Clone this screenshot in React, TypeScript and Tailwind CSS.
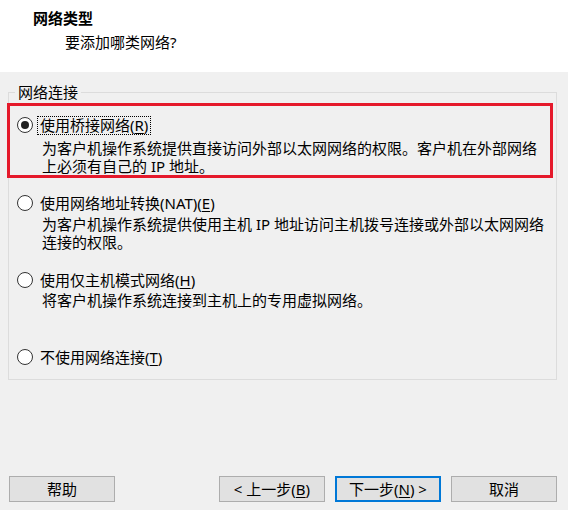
import type { ReactNode } from 'react';

const font = { fontFamily: '"Noto Sans", "Noto Sans CJK SC", sans-serif' };

function Radio({ checked }: { checked?: boolean }) {
  return (
    <span className="w-[16px] h-[16px] rounded-full border-[1.5px] border-[#333] bg-white flex items-center justify-center shrink-0">
      {checked && <span className="w-[8px] h-[8px] rounded-full bg-[#222]" />}
    </span>
  );
}

function OptionLabel({ children, checked, focused }: { children: ReactNode; checked?: boolean; focused?: boolean }) {
  return (
    <div className="h-[20px] flex items-center gap-[4px]">
      <Radio checked={checked} />
      <span
        className={
          focused
            ? 'border border-dotted border-black px-[2px] leading-[17px] whitespace-nowrap'
            : 'border border-transparent px-[2px] leading-[17px] whitespace-nowrap'
        }
      >
        {children}
      </span>
    </div>
  );
}

function Key({ k }: { k: string }) {
  return <u className="underline-offset-2">{k}</u>;
}

function Button({ children, primary }: { children: ReactNode; primary?: boolean }) {
  return (
    <button
      className={
        primary
          ? 'w-[106px] h-[26px] bg-[#e1e1e1] border-2 border-[#0078d7] flex items-center justify-center text-[15px] leading-[18px] text-black'
          : 'w-[106px] h-[26px] bg-[#e1e1e1] border border-[#adadad] flex items-center justify-center text-[15px] leading-[18px] text-black'
      }
    >
      {children}
    </button>
  );
}

export default function App() {
  return (
    <div className="w-[568px] h-[510px] bg-[#f0f0f0] flex flex-col text-[15px] text-black overflow-hidden" style={font}>
      {/* Header */}
      <div className="h-[72px] bg-white shrink-0">
        <div className="pl-[33px] pt-[8px] leading-[20px] font-bold">网络类型</div>
        <div className="pl-[65px] mt-[4px] leading-[20px]">要添加哪类网络?</div>
      </div>

      {/* Group box */}
      <div className="pt-[20px] pl-[8px] pr-[11px]">
        <div className="relative h-[288px] border border-[#dcdcdc]">
          <span className="absolute left-[6px] -top-[10px] px-[3px] bg-[#f0f0f0] leading-[18px]">网络连接</span>

          <div className="mt-[10px] ml-[-2px] w-[546px] border-[3px] border-[#e5192b] pl-[7px] pt-[9px]">
            <OptionLabel checked focused>
              使用桥接网络(<Key k="R" />)
            </OptionLabel>
            <div className="mt-[4px] pl-[25px] leading-[18px] whitespace-nowrap">
              为客户机操作系统提供直接访问外部以太网网络的权限。客户机在外部网络
              <br />
              上必须有自己的 IP 地址。
            </div>
          </div>

          <div className="mt-[15px] pl-[8px]">
            <OptionLabel>
              使用网络地址转换(NAT)(<Key k="E" />)
            </OptionLabel>
            <div className="mt-[2px] pl-[25px] leading-[18px] whitespace-nowrap">
              为客户机操作系统提供使用主机 IP 地址访问主机拨号连接或外部以太网网络
              <br />
              连接的权限。
            </div>
          </div>

          <div className="mt-[19px] pl-[8px]">
            <OptionLabel>
              使用仅主机模式网络(<Key k="H" />)
            </OptionLabel>
            <div className="mt-[1px] pl-[25px] leading-[18px] whitespace-nowrap">
              将客户机操作系统连接到主机上的专用虚拟网络。
            </div>
          </div>

          <div className="mt-[38px] pl-[8px]">
            <OptionLabel>
              不使用网络连接(<Key k="T" />)
            </OptionLabel>
          </div>
        </div>
      </div>

      <div className="flex-1" />

      {/* Footer buttons */}
      <div className="flex justify-between pl-[9px] pr-[11px] pb-[8px]">
        <Button>帮助</Button>
        <div className="flex gap-[10px]">
          <Button>
            &lt; 上一步(<Key k="B" />)
          </Button>
          <Button primary>
            下一步(<Key k="N" />) &gt;
          </Button>
          <Button>取消</Button>
        </div>
      </div>
    </div>
  );
}
